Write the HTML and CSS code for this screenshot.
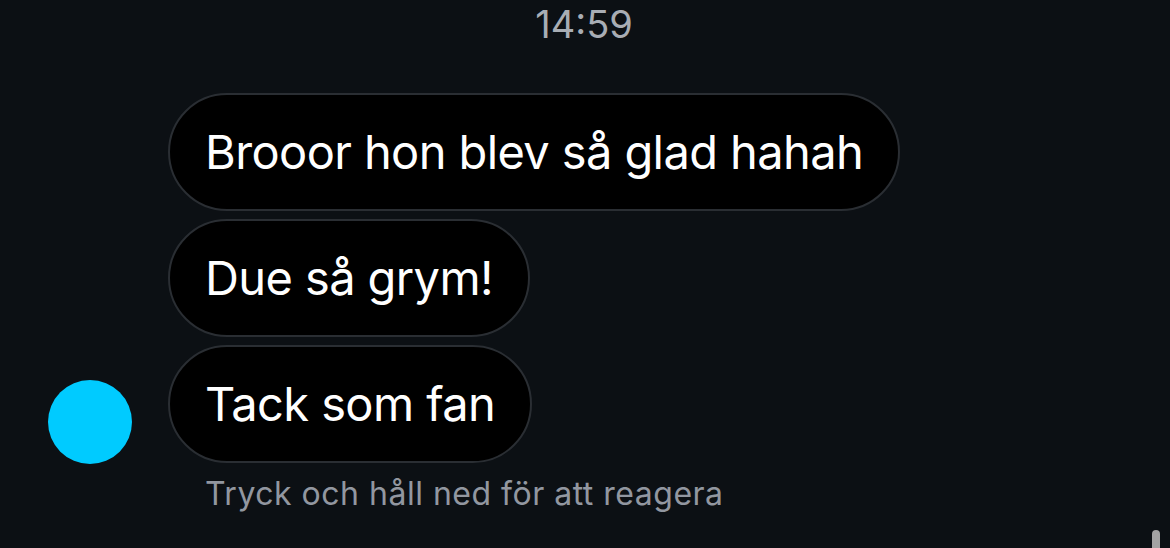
FILE: index.html
```html
<!DOCTYPE html>
<html lang="sv">
<head>
<meta charset="utf-8">
<link rel="stylesheet" href="styles.css">
</head>
<body>
<div class="page">
  <div class="time">14:59</div>
  <div class="thread">
    <div class="row">
      <div class="avatar-slot"></div>
      <div class="bubble">Brooor hon blev så glad hahah</div>
    </div>
    <div class="row">
      <div class="avatar-slot"></div>
      <div class="bubble">Due så grym!</div>
    </div>
    <div class="row">
      <div class="avatar-slot"><div class="avatar"></div></div>
      <div class="bubble">Tack som fan</div>
    </div>
  </div>
  <div class="hint">Tryck och håll ned för att reagera</div>
  <div class="scrollbar"></div>
</div>
</body>
</html>
```
FILE: styles.css
```css
html, body {
  margin: 0;
  padding: 0;
  background: #0c1014;
  height: 100%;
  overflow: hidden;
}
.page {
  position: relative;
  height: 548px;
  font-family: Inter, "Noto Sans", sans-serif;
}
.time {
  text-align: center;
  color: #a8adb4;
  font-size: 38px;
  line-height: 44px;
  padding-top: 2px;
  margin-right: 2px;
}
.thread {
  display: flex;
  flex-direction: column;
  gap: 8px;
  margin-top: 47px;
}
.row {
  display: flex;
  align-items: flex-end;
}
.avatar-slot {
  width: 120px;
  padding-left: 48px;
  flex: none;
  display: flex;
  align-items: flex-end;
}
.avatar {
  width: 84px;
  height: 84px;
  border-radius: 50%;
  background: #00cbff;
  margin-bottom: -1px;
}
.bubble {
  box-sizing: border-box;
  height: 118px;
  border: 2px solid #2a2e33;
  background: #000;
  border-radius: 59px;
  padding: 0 35px;
  color: #fff;
  font-size: 47px;
  letter-spacing: -0.6px;
  line-height: 114px;
  white-space: nowrap;
}
.hint {
  padding-left: 205px;
  margin-top: 12px;
  color: #9297a0;
  font-size: 32px;
  letter-spacing: 0.5px;
  line-height: 38px;
}
.scrollbar {
  position: absolute;
  left: 1152px;
  top: 530px;
  width: 8px;
  height: 30px;
  border-radius: 4px;
  background: #a3a3a3;
}
```
